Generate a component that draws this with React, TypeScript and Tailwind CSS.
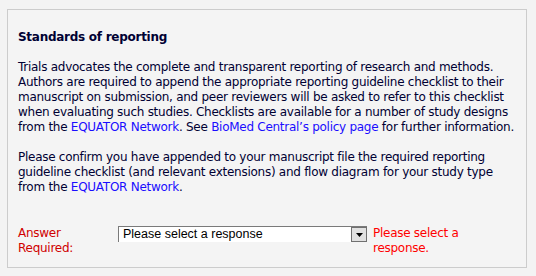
import React from "react";

const font = { fontFamily: '"DejaVu Sans", Verdana, sans-serif' };

function Link({ children }: { children: React.ReactNode }) {
  return <a className="text-[#1a0dff] no-underline">{children}</a>;
}

export default function App() {
  return (
    <div className="w-[536px] h-[276px] bg-[#f3f3f3] pt-[9px] pl-[7px] overflow-hidden">
      <div
        className="w-[520px] h-[259px] border border-[#cccccc] bg-[#f4f4f4] pt-[20px] pl-[10px] text-[12px] leading-[15px] tracking-[-0.27px] text-[#000033]"
        style={font}
      >
        <h2 className="font-bold text-[12px] leading-[15px] mb-[15px]">Standards of reporting</h2>
        <p className="mb-[15px] whitespace-nowrap">
          Trials advocates the complete and transparent reporting of research and methods.
          <br />
          Authors are required to append the appropriate reporting guideline checklist to their
          <br />
          manuscript on submission, and peer reviewers will be asked to refer to this checklist
          <br />
          when evaluating such studies. Checklists are available for a number of study designs
          <br />
          from the <Link>EQUATOR Network</Link>. See <Link>BioMed Central’s policy page</Link> for further information.
        </p>
        <p className="whitespace-nowrap">
          Please confirm you have appended to your manuscript file the required reporting
          <br />
          guideline checklist (and relevant extensions) and flow diagram for your study type
          <br />
          from the <Link>EQUATOR Network</Link>.
        </p>
        <div className="flex items-start mt-[31px]">
          <div className="w-[100px] text-[#d00000]">
            Answer
            <br />
            Required:
          </div>
          <div className="w-[249px] h-[16px] bg-white border-t border-l border-[#7a7a7a] flex items-stretch tracking-normal">
            <div
              className="flex-1 pl-[4px] text-[12.5px] leading-[15px] text-black"
              style={{ fontFamily: '"Liberation Sans", Arial, sans-serif' }}
            >
              Please select a response
            </div>
            <div className="w-[16px] h-[15px] border border-[#707070] bg-[#e1e1e1] flex items-center justify-center">
              <svg width="7" height="4" viewBox="0 0 7 4">
                <path d="M0 0h7L3.5 4z" fill="#000" />
              </svg>
            </div>
          </div>
          <div className="ml-[6px] text-[#ff0000]">
            Please select a
            <br />
            response.
          </div>
        </div>
      </div>
    </div>
  );
}
